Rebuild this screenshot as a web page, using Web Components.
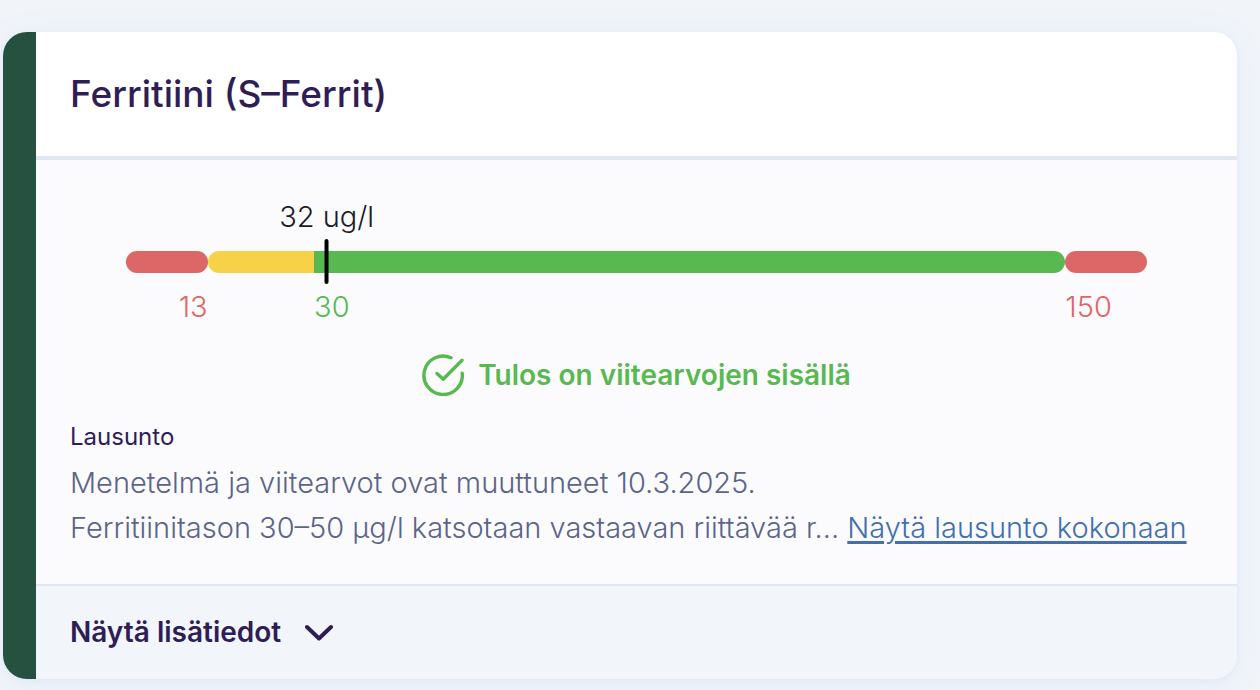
<!DOCTYPE html>
<html lang="fi">
<head>
<meta charset="utf-8">
<meta name="viewport" content="width=device-width, initial-scale=1">
<title>Ferritiini (S–Ferrit)</title>
<style>
    body {
        margin: 0;
        padding: 32px 23px 11px 3px;
        background: #f1f5fa;
        font-family: Inter, "Liberation Sans", sans-serif;
        font-size: 29px;
        font-weight: 350;
        color: #5c6488;
    }
</style>
</head>
<body>
<result-card>
    <h2 slot="title">Ferritiini (S–Ferrit)</h2>
    <range-gauge low="13" target="30" high="150" value="32" unit="ug/l"></range-gauge>
    <result-status>Tulos on viitearvojen sisällä</result-status>
    <result-statement heading="Lausunto">
        Menetelmä ja viitearvot ovat muuttuneet 10.3.2025.<br>
        Ferritiinitason 30–50 µg/l katsotaan vastaavan riittävää r...
        <a slot="more" href="#lausunto">Näytä lausunto kokonaan</a>
    </result-statement>
    <details-toggle slot="footer">Näytä lisätiedot</details-toggle>
</result-card>

<script>
    class BaseElement extends HTMLElement {
        constructor() {
            super();
            this.attachShadow({ mode: 'open' });
        }

        connectedCallback() {
            const template = document.createElement('template');
            template.innerHTML = `<style>* { box-sizing: border-box; }${this.getStyle()}</style>${this.getTemplate()}`;
            this.shadowRoot.replaceChildren(template.content.cloneNode(true));
        }
    }

    class ResultCard extends BaseElement {
        getTemplate() {
            return `
                <header><slot name="title"></slot></header>
                <div class="body"><slot></slot></div>
                <footer><slot name="footer"></slot></footer>
            `;
        }

        getStyle() {
            return `
                :host {
                    display: block;
                    overflow: hidden;
                    border-left: 33px solid #265140;
                    border-radius: 24px;
                    background: #fbfbfe;
                    box-shadow: 0 4px 32px #e4ebf7, 0 2px 6px #dfe8f5;
                }

                header {
                    padding: 38px 34px;
                    background: #fff;
                    border-bottom: 4px solid #e1e8f5;
                }

                ::slotted(h2) {
                    margin: 0;
                    font-size: 37px;
                    font-weight: 550;
                    line-height: 48px;
                    color: #2f1d55;
                }

                .body {
                    padding: 36px 34px 34px;
                }

                footer {
                    background: #f2f5fa;
                    border-top: 2px solid #dfe8f5;
                }
            `;
        }
    }

    class RangeGauge extends BaseElement {
        percent(value) {
            const low = Number(this.getAttribute('low'));
            const high = Number(this.getAttribute('high'));
            return (value - low) / (high - low) * 100;
        }

        getTemplate() {
            const { low, target, high, value, unit } = Object.fromEntries(
                [...this.attributes].map(a => [a.name, a.value])
            );
            return `
                <div class="row">
                    <div class="bar out"></div>
                    <div class="bar in">
                        <div class="pin" style="left: ${this.percent(value)}%">
                            <span>${value} ${unit}</span>
                            <i></i>
                        </div>
                    </div>
                    <div class="bar out"></div>
                </div>
                <div class="row labels">
                    <span class="low">${low}</span>
                    <div class="middle">
                        <div class="spacer"></div>
                        <span class="target">${target}</span>
                    </div>
                    <span class="high">${high}</span>
                </div>
            `;
        }

        getStyle() {
            const target = this.percent(this.getAttribute('target'));
            return `
                :host {
                    display: block;
                    padding: 55px 56px 0;
                    line-height: 40px;
                }

                .row {
                    display: grid;
                    grid-template-columns: 8% 1fr 8%;
                }

                .bar {
                    height: 22px;
                    border-radius: 11px;
                }

                .out {
                    background: #dd6767;
                }

                .in {
                    position: relative;
                    background: linear-gradient(to right, #f7d148 ${target}%, #58b951 ${target}%);
                }

                .pin {
                    position: absolute;
                    bottom: -11px;
                    display: flex;
                    flex-direction: column;
                    align-items: center;
                    gap: 2px;
                    transform: translateX(-50%);
                    white-space: nowrap;
                    color: #1b1b26;
                }

                .pin i {
                    width: 4px;
                    height: 45px;
                    border-radius: 2px;
                    background: #000;
                }

                .labels {
                    padding-top: 14px;
                }

                .middle {
                    display: flex;
                }

                .spacer {
                    flex: 0 0 ${target}%;
                }

                .low {
                    text-align: right;
                }

                .low, .high {
                    color: #dd6767;
                }

                .target {
                    color: #58b951;
                }
            `;
        }
    }

    class ResultStatus extends BaseElement {
        getTemplate() {
            return `
                <svg viewBox="0 0 42 42" fill="none" stroke="currentColor" stroke-width="3.4" stroke-linecap="round" stroke-linejoin="round" aria-hidden="true">
                    <path d="M29 3.8A19.2 19.2 0 1 0 40.2 19.2"/>
                    <path d="M15 19.5l6.2 5.8L40 6.2"/>
                </svg>
                <slot></slot>
            `;
        }

        getStyle() {
            return `
                :host {
                    display: flex;
                    justify-content: center;
                    align-items: center;
                    gap: 14px;
                    padding: 27px 0 20px;
                    line-height: 42px;
                    font-size: 28px;
                    font-weight: 600;
                    color: #58b951;
                }

                svg {
                    flex: none;
                    width: 42px;
                    height: 42px;
                }
            `;
        }
    }

    class ResultStatement extends BaseElement {
        getTemplate() {
            return `
                <h3>${this.getAttribute('heading')}</h3>
                <p><slot></slot> <slot name="more"></slot></p>
            `;
        }

        getStyle() {
            return `
                :host {
                    display: block;
                }

                h3 {
                    margin: 0 0 2px;
                    font-size: 24px;
                    font-weight: 400;
                    line-height: 42px;
                    color: #2f1d55;
                }

                p {
                    margin: 0;
                    line-height: 45px;
                }

                ::slotted(a) {
                    color: #426fad;
                    text-decoration-thickness: 3px;
                    text-underline-offset: 3px;
                }
            `;
        }
    }

    class DetailsToggle extends BaseElement {
        getTemplate() {
            return `
                <button type="button" aria-expanded="false">
                    <slot></slot>
                    <svg viewBox="0 0 28 18" fill="none" stroke="currentColor" stroke-width="4" stroke-linecap="round" stroke-linejoin="round" aria-hidden="true">
                        <path d="M2 3l12 11.5L26 3"/>
                    </svg>
                </button>
            `;
        }

        getStyle() {
            return `
                :host {
                    display: block;
                }

                button {
                    display: flex;
                    align-items: center;
                    gap: 24px;
                    width: 100%;
                    padding: 24px 34px;
                    border: 0;
                    background: none;
                    font: inherit;
                    font-size: 28px;
                    font-weight: 600;
                    line-height: 45px;
                    color: #2f1d55;
                    cursor: pointer;
                }

                svg {
                    width: 28px;
                    height: 18px;
                }
            `;
        }
    }

    customElements.define('result-card', ResultCard);
    customElements.define('range-gauge', RangeGauge);
    customElements.define('result-status', ResultStatus);
    customElements.define('result-statement', ResultStatement);
    customElements.define('details-toggle', DetailsToggle);
</script>
</body>
</html>
